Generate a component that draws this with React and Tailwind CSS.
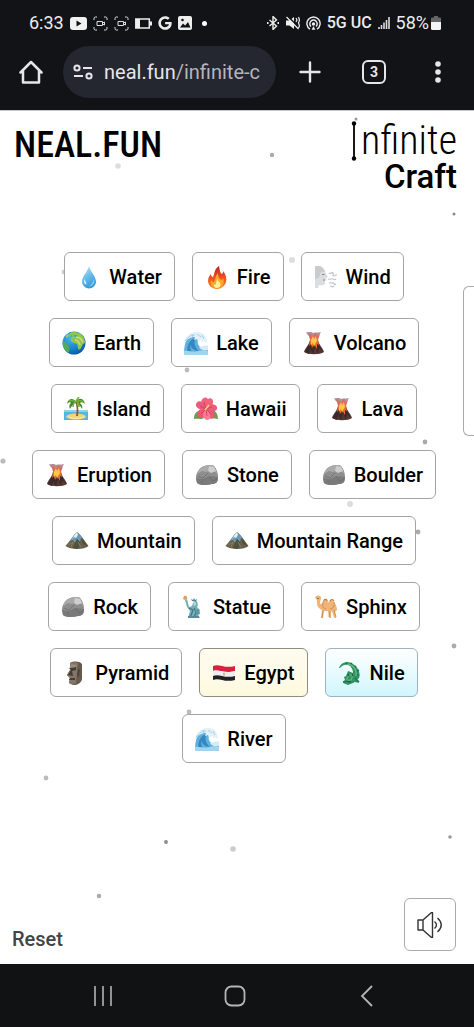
import { useState } from "react"
import { FaGoogle } from "react-icons/fa"

const ITEMS = [
  { icon: "water", name: "Water" },
  { icon: "fire", name: "Fire" },
  { icon: "wind", name: "Wind" },
  { icon: "earth", name: "Earth" },
  { icon: "wave", name: "Lake" },
  { icon: "volcano", name: "Volcano" },
  { icon: "island", name: "Island" },
  { icon: "flower", name: "Hawaii" },
  { icon: "volcano", name: "Lava" },
  { icon: "volcano", name: "Eruption" },
  { icon: "rock", name: "Stone" },
  { icon: "rock", name: "Boulder" },
  { icon: "mountain", name: "Mountain" },
  { icon: "mountain", name: "Mountain Range" },
  { icon: "rock", name: "Rock" },
  { icon: "statue", name: "Statue" },
  { icon: "camel", name: "Sphinx" },
  { icon: "moai", name: "Pyramid" },
  { icon: "flag", name: "Egypt", tone: "sand" },
  { icon: "crocodile", name: "Nile", tone: "ice" },
  { icon: "wave", name: "River" },
]

// Floating background particles: x, y, radius, colour
const PARTICLES = [
  [356, 8, 1.5, "#999"],
  [272, 44, 2.2, "#aaa"],
  [118, 55, 2.8, "#ddd"],
  [454, 103, 1.5, "#888"],
  [292, 149, 3, "#ddd"],
  [64, 161, 2.4, "#ccc"],
  [187, 259, 2.4, "#bbb"],
  [425, 331, 2.4, "#aaa"],
  [3, 350, 2.6, "#bbb"],
  [350, 393, 3, "#ddd"],
  [418, 421, 2.4, "#aaa"],
  [454, 535, 2.4, "#aaa"],
  [189, 601, 2.4, "#bbb"],
  [46, 667, 2.4, "#bbb"],
  [450, 726, 1.8, "#999"],
  [166, 731, 1.9, "#888"],
  [233, 738, 2.8, "#ccc"],
  [99, 785, 2.2, "#aaa"],
]

const TONES = {
  plain: "border-[#a5a5a5] bg-white",
  sand: "border-[#8f8c80] bg-linear-to-b from-[#fffcf0] to-[#fdf9e0]",
  ice: "border-[#9fb2bd] bg-linear-to-b from-white to-[#cff6fd]",
}

const DRAWINGS = {
  water: (
    <>
      <defs>
        <linearGradient id="drop" x1="0" y1="0" x2="0.4" y2="1">
          <stop offset="0" stopColor="#c5e4f2" />
          <stop offset="0.6" stopColor="#65b9e8" />
          <stop offset="1" stopColor="#389adb" />
        </linearGradient>
      </defs>
      <path d="M12 1C11 6 5 11 5 17a7 6.500 0 0 0 14 0C19 11 13 6 12 1z" fill="url(#drop)" />
      <path d="M7.500 14c-1 3 0 5 1.500 5.500 1-.5-.5-3-1.500-5.500z" fill="#e5f7ff" />
      <path d="M17 14c1 4-1 7-5 7.500 3-2 4-4 5-7.500z" fill="#8bd5fa" />
    </>
  ),
  fire: (
    <>
      <defs>
        <linearGradient id="flame" x1="0" y1="0" x2="0" y2="1">
          <stop offset="0" stopColor="#b9211c" />
          <stop offset="0.45" stopColor="#ee4b23" />
          <stop offset="1" stopColor="#f58a22" />
        </linearGradient>
      </defs>
      <path d="M14 1c1 5 1 7 3 8 1-1 1-2 1-3 3 4 4 7 3 11-1 4-5 7-9 7s-9-3-9-8c0-4 2-6 3-7 0 2 1 3 2 3 2-4 1-8 6-11z" fill="url(#flame)" />
      <path d="M13 8c0 4 1 5 3 7 1 0 2-1 2-2 2 5 0 10-6 10-5 0-7-3-6-8 1 2 2 2 3 2 2-3 1-6 4-9z" fill="#fba927" />
      <path d="M12.500 14c0 2 3 3 3 6 0 2-2 3-4 3s-3-2-2.500-4c1 1 1.500 1 2 0 .5-2 0-3 1.500-5z" fill="#fff19b" />
    </>
  ),
  wind: (
    <>
      <path d="M1 1h5c3 1 5 4 5.500 7l2.500 4-2 1 .5 2-1.500 1v3c-2 2-4 1-6 1l-1 3H1z" fill="#dcddde" />
      <path d="M1 1h5c2 1 4 3 5 6-4-1-5 0-5 3-1 3-3 4-5 4z" fill="#c9cbcd" />
      <path d="M8 9.500h2.500M9 15h2" stroke="#858789" strokeWidth="1" />
      <path d="M15 8c2 2 3-2 4 0s-1 3 1 3 1-2 3-1M14 14c3 1 3-1 5 0s2 1 3 0M15 18c2-1 3 1 4 0s1 3 3 1M16 21c2 0 2 2 4 0" fill="none" stroke="#bfc2c5" strokeWidth="1.200" />
    </>
  ),
  earth: (
    <>
      <defs>
        <radialGradient id="ocean" cx="0.35" cy="0.3" r="0.8">
          <stop offset="0" stopColor="#49b4ee" />
          <stop offset="0.6" stopColor="#1680cc" />
          <stop offset="1" stopColor="#0a4e9b" />
        </radialGradient>
      </defs>
      <circle cx="12" cy="12" r="11.500" fill="url(#ocean)" />
      <path d="M8 2c3-2 8-1 11 1 2 2 4 5 4 9l-2 1-2 4c-1 2-3 2-3 0l-1-4c-2-1-4-1-6-3-1-2 0-4 2-5l3 1 2-1-3-1-2 1-2-1-1 2-2-1 2-2z" fill="#8fc650" />
      <path d="M14 6l4 1 3 4M13 9c2 0 4 2 5 5" stroke="#d5d970" strokeWidth="1.500" fill="none" />
      <path d="M1 10c3 1 5 4 6 6 1 3 0 5-1 6-3-2-6-7-5-12z" fill="#55a862" />
      <path d="M4 4l3-1-1 3-2 1z" fill="#9ac970" />
    </>
  ),
  wave: (
    <>
      <path d="M0 24C0 13 2 4 11 2c6-1 10 3 11 8l-3-2c-4-1-6 2-5 5s5 5 10 5v6z" fill="#5fb2e0" />
      <path d="M3 22C3 13 6 8 12 7c-3 4-1 10 3 13-4 0-7-2-9-6 0 4 1 6 3 8z" fill="#3587c0" />
      <path d="M0 13C1 6 5 2 11 1c7-1 11 3 12 9l-1 2-2-2-1 2-2-3-3 2-1-3-3 1 1-3c-5 0-8 2-11 7z" fill="#e3f1f8" />
      <path d="M1 10c3-4 6-6 10-6M13 3l4 3M8 3l1 3M18 4l2 4" stroke="#9ccbe4" strokeWidth="0.900" fill="none" />
      <path d="M15 16c2-1 3 0 4-1s3 0 5-1v5c-4 1-7 0-9-3z" fill="#d5ecf7" />
      <path d="M0 20c6-1 9 2 14 0 4-1 7-1 10 0v4H0z" fill="#9fd5f0" />
    </>
  ),
  volcano: (
    <>
      <path d="M4 1c3 1 4-1 7 1 2-1 5 0 8-1-1 2-2 3-3 4v4H8V5C6 5 5 3 4 1z" fill="#b08f99" />
      <path d="M6 2l5 3 3-3 1 3 3-2-2 6H8L7 5z" fill="#d96b5f" />
      <path d="M8 9h8c1 5 5 8 6 12-4 3-16 3-20 0 1-4 5-7 6-12z" fill="#553731" />
      <path d="M9 9c-1 5-5 8-6 12l4 2 1-5 3 5 2-7 3 7 1-6 4 4c-2-4-5-8-6-12z" fill="#3c2929" />
      <path d="M8 9h8l1 5-2-1v5l-3-5-2 4-1-4-2 2z" fill="#f06b2e" />
      <path d="M9 9l2-4 1 3 2-3 1 5-2 3-1 3-1-4-2 2z" fill="#ffc746" />
    </>
  ),
  island: (
    <>
      <path d="M0 13h24v10H0z" fill="#55b5e2" />
      <path d="M0 13h24v2H0z" fill="#8dd4ee" />
      <ellipse cx="12" cy="19.500" rx="10" ry="3" fill="#f4d27d" />
      <path d="M5 20c5 2 10 2 15 0" stroke="#fff0b5" fill="none" />
      <path d="M11 5c2 4 2 8 1 14h2c1-6 0-10-1-14z" fill="#8a5b35" />
      <path d="M12 5C9 0 4 2 3 7c2-2 3-2 4-1-2 1-2 4-1 6 1-3 4-5 6-7zM12 5c2-5 8-4 9 2-2-2-4-2-5-1 2 2 3 4 2 6-1-3-4-5-6-7z" fill="#438c2b" />
      <path d="M12 5C9 3 7 3 5 4M13 5c2-2 4-2 6 0M12 5c-2 0-3 3-3 5M13 5c2 1 2 3 2 5M12 5c0-2 1-3 3-5" stroke="#74ad38" strokeWidth="1.500" fill="none" />
    </>
  ),
  flower: (
    <>
      <path d="M0 22c0-6 3-8 7-9l3 8c-3 2-6 0-10 1zM24 22c0-6-3-9-8-10l-2 9c3 1 6 0 10 1z" fill="#6d9b50" />
      <path d="M12 12C6 9 6 2 10 1c2-1 3 0 4 1 3-2 6 1 5 4-1 3-4 5-7 6z" fill="#f2627f" />
      <path d="M12 12C6 14 1 10 2 7c1-3 4-4 7-1 2 2 3 3 3 6zM12 12c3-6 9-6 11-2 1 4-3 6-11 2z" fill="#ef5a7b" />
      <path d="M12 12c6 0 10 4 8 8-3 3-7 2-8-8zM12 12C6 10 2 15 4 19c3 4 8 2 8-7z" fill="#ef5778" />
      <path d="M12 12c-5 5-3 10 1 11 4 0 5-6-1-11z" fill="#f87c91" />
      <path d="M12 12L10 5M12 12L6 9M12 12l6-2M12 12l5 5M12 12l-5 5M12 12l1 7" stroke="#cf3b63" strokeWidth="0.800" />
      <path d="M11 13l4-5" stroke="#ffd466" strokeWidth="1.500" />
    </>
  ),
  rock: (
    <>
      <path d="M1 15c0-5 3-9 6-11 4-2 9-3 12-1 3 3 4 8 4 11 0 5-2 7-6 7-5 1-11 2-15-1z" fill="#8e8e8e" />
      <path d="M7 4c4-2 9-3 12-1l3 7-6-3-5 2-4-1-5 3c1-3 3-6 5-7z" fill="#aaa" />
      <path d="M14 3l5 1 2 4-5 2-3-2z" fill="#cecece" />
      <path d="M1 15l7 1 6-3 9 1c0 5-2 7-6 7-5 1-11 2-15-1z" fill="#7a7a7a" />
      <path d="M3 13l5 2 5-5M14 14l4 4 4-2M8 16l-2 4" stroke="#6a6a6a" strokeWidth="0.700" fill="none" />
    </>
  ),
  mountain: (
    <>
      <path d="M12 3c4 3 8 9 11.500 14-4 4-18 4-23 0C5 12 8 7 12 3z" fill="#675f48" />
      <path d="M12 3c2 1 4 4 6 7l-2-1-1 4-3-3-2 4-2-3-3 1c2-4 5-7 7-9z" fill="#6999b5" />
      <path d="M12 3l1 3-2 3-2-1-2 3c1-3 3-6 5-8z" fill="#e0eef3" />
      <path d="M12 10l-2 4-2 5 5 1 2-7M16 9l2 6 5 2" fill="#4d513d" />
      <path d="M3 16l5-3-2 5M13 13l3 5" stroke="#8c8059" fill="none" />
    </>
  ),
  statue: (
    <>
      <path d="M3 1c2-1 4 1 3 3L4 5 2 4z" fill="#d8a35e" />
      <path d="M4 5l2-1 2 8 3-1 1-3 4-2 1 4-1 2 3 3-2 4 2 4H7l2-7-3-4z" fill="#78aeb7" />
      <path d="M11 6l-1-2 2 1 1-2 1 2 2-1-1 3z" fill="#4f8997" />
      <path d="M12 7h3v3l-2 1z" fill="#b1d5d6" />
      <path d="M8 13l4 2-3 8M13 13l2 4-2 6" stroke="#3d7482" strokeWidth="1.200" fill="none" />
      <path d="M14 15l4-1 1 5-4 1z" fill="#5c98a3" />
      <path d="M7 21h11v2H7z" fill="#538b9a" />
    </>
  ),
  camel: (
    <>
      <path d="M1 3c1-3 4-3 6-1 0 3-1 4-1 7 2 0 3-1 4-4 2-2 4 0 4 3 2-4 5-5 6-1 2 3 3 5 3 8l-2 2 1 6h-2l-2-7-1 1v6h-2l-1-7h-4l-1 7H7l1-8c-3-2-5-3-5-7V5z" fill="#efb477" />
      <path d="M10 5c-2 4-2 8 2 9M20 7c1 4-1 7-4 7" stroke="#cf9057" fill="none" />
      <path d="M9 16l-1 7M20 15l2 7M16 16l-1 6" stroke="#c88a50" strokeWidth="0.900" />
      <path d="M10 5c1-1 3-1 3 1M16 6c1-2 3-2 4 0" stroke="#b87d45" strokeWidth="1.200" fill="none" />
      <circle cx="4" cy="3.300" r="0.600" fill="#40291c" />
    </>
  ),
  moai: (
    <>
      <path d="M7 2c4-2 9-2 12 1v15c-1 4-4 6-9 6l-4-2 1-5-3-3 3-5z" fill="#665a4d" />
      <path d="M7 2c3-1 6-1 8 0l-1 9-1 11-3 2-4-2 1-5-3-3 3-5z" fill="#82766a" />
      <path d="M6 7l7-1v3l-4 1 1 5-5-1 3-5zM7 17h5v2H6z" fill="#443c35" />
      <path d="M8 3l6 1-1 2-6 1z" fill="#9a8c7a" />
      <path d="M15 8l2 1-1 6-2 1z" fill="#4c433b" />
    </>
  ),
  flag: (
    <>
      <path d="M1 5c6-3 11 3 22 0v5C12 13 7 8 1 10z" fill="#dc2140" />
      <path d="M1 10c6-2 11 3 22 0v5c-11 3-16-3-22 0z" fill="#eee" />
      <path d="M1 15c6-3 11 3 22 0v4c-11 3-16-3-22 0z" fill="#202124" />
      <path d="M11 11.500l1 .5 1-.5v3h-2z" fill="#d9b878" />
    </>
  ),
  crocodile: (
    <>
      <path d="M1 7C3 1 10-1 15 3c5 3 8 9 6 14l-2 2 2 3-4-1-2 1-5 2-5-2 2-3-1-3 2-1 2-5 5 2c0-4-2-7-5-8-4-1-6 1-8 3z" fill="#2f9363" />
      <path d="M9 3c7 1 10 6 9 12M11 14l-3 6 5-1 2-5z" fill="none" stroke="#69b57d" strokeWidth="1.300" />
      <path d="M9 3l-1-1M13 3l1-1M17 6l1-1M19 10l2-1M19 14l2 0" stroke="#226645" strokeWidth="1.200" />
      <path d="M10 13l1 2M14 13l1 2M8 20l5 1" stroke="#195038" strokeWidth="1.100" />
      <path d="M17 17l4 4M8 20l-3 1" stroke="#26724d" strokeWidth="1.500" />
    </>
  ),
}

function Emoji({ name }) {
  return (
    <svg viewBox="0 0 24 24" className="size-6 shrink-0" aria-hidden="true">
      {DRAWINGS[name]}
    </svg>
  )
}

function Item({ item }) {
  return (
    <button
      className={`flex h-[49px] items-center gap-2 rounded-md border px-3 text-xl font-medium text-black ${
        TONES[item.tone || "plain"]
      }`}
    >
      <Emoji name={item.icon} />
      {item.name}
    </button>
  )
}

function CaptureIcon() {
  return (
    <svg viewBox="0 0 15 15" className="size-[15px]" fill="none" stroke="#ddd" aria-hidden="true">
      <path d="M1 4V2.500Q1 1 2.500 1H4M11 1h1.500Q14 1 14 2.500V4M14 11v1.500q0 1.500-1.500 1.500H11M4 14H2.500Q1 14 1 12.500V11" />
      <path d="M4 5.500h5.500v4H4zM9.500 7l2-1v3l-2-1" />
    </svg>
  )
}

function StatusBar() {
  return (
    <div className="flex h-[46px] items-center justify-between pr-[33px] pl-[29px] text-[#ececec]">
      <div className="flex items-center gap-[6px]">
        <span className="text-lg">6:33</span>
        <svg viewBox="0 0 17 13" className="h-[13px] w-[17px]" aria-hidden="true">
          <rect width="17" height="13" rx="3" fill="#f1f1f1" />
          <path d="M6.500 3.500v6l5-3z" fill="#121316" />
        </svg>
        <CaptureIcon />
        <CaptureIcon />
        <svg viewBox="0 0 17 11" className="h-[11px] w-[17px]" aria-hidden="true">
          <rect x="0.800" y="1" width="13.500" height="9" fill="none" stroke="#eee" strokeWidth="1.500" />
          <path d="M1 1h4v9H1zM15 3.500h2v4h-2z" fill="#eee" />
        </svg>
        <FaGoogle className="size-[14px]" />
        <svg viewBox="0 0 14 14" className="size-[14px]" aria-hidden="true">
          <rect width="14" height="14" rx="2" fill="#eee" />
          <path d="M2 11.500l3-4 2.200 2L10 6l2.500 5.500z" fill="#121316" />
          <circle cx="4.500" cy="4" r="1.300" fill="#121316" />
        </svg>
        <span className="ml-1 size-[5px] rounded-full bg-white" />
      </div>
      <div className="flex items-center gap-[6px]">
        <svg viewBox="0 0 14 14" className="size-[14px]" fill="none" stroke="#eee" strokeWidth="1.400" aria-hidden="true">
          <path d="M3.500 4l7 6-3.500 3.500v-13L10.500 4l-7 6" />
          <path d="M1 7h1.500M11.500 7H13" strokeWidth="2" />
        </svg>
        <svg viewBox="0 0 14 14" className="size-[14px]" aria-hidden="true">
          <path d="M0 4.500h3.500L8 1v12L3.500 9.500H0z" fill="#eee" />
          <path d="M1.500 0l12.500 12.500" stroke="#121316" strokeWidth="1.500" />
          <path d="M.5 1l12 12M10 2l1 2-1 2M12.500 1l1 3-1 3 1 3-1 2" fill="none" stroke="#eee" strokeWidth="1.200" />
        </svg>
        <svg viewBox="0 0 15 15" className="size-[15px]" fill="none" stroke="#eee" strokeWidth="1.400" aria-hidden="true">
          <path d="M4 13.200a6.600 6.600 0 1 1 7 0M5 10.500a3.700 3.700 0 1 1 5 0" />
          <circle cx="7.500" cy="8" r="1" fill="#eee" />
          <path d="M6 13.500l1.500-3 1.500 3z" fill="#eee" strokeWidth="0.500" />
        </svg>
        <span className="text-base font-medium">5G UC</span>
        <svg viewBox="0 0 12 12" className="size-3" stroke="#ddd" strokeWidth="1.600" aria-hidden="true">
          <path d="M1 12v-2M3.500 12V8M6 12V5.500M8.500 12V3M11 12V0" />
        </svg>
        <div className="flex items-center gap-[2px]">
          <span className="text-lg">58%</span>
          <svg viewBox="0 0 10 14" className="h-[14px] w-[10px]" aria-hidden="true">
            <path d="M3 0h4v1.500h2q1 0 1 1V6H0V2.500q0-1 1-1h2z" fill="#666" />
            <path d="M0 6h10v6.500q0 1.500-1.500 1.500h-7Q0 14 0 12.500z" fill="#f4f4f4" />
          </svg>
        </div>
      </div>
    </div>
  )
}

function BrowserBar() {
  return (
    <div className="flex items-center pr-6 pb-3 pl-[19px] text-[#e6e6ea]">
      <button aria-label="Home" className="mr-5">
        <svg viewBox="0 0 24 24" className="size-6" fill="none" stroke="currentColor" strokeWidth="2.500" strokeLinejoin="round" strokeLinecap="round">
          <path d="M1.500 12.500L12 2l10.500 10.500M4 11v11.500h16V11" />
        </svg>
      </button>
      <button className="flex h-[52px] min-w-0 flex-1 items-center gap-[11px] overflow-hidden rounded-full bg-[#242630] pr-[8px] pl-[10px] text-xl">
        <svg viewBox="0 0 20 16" className="h-4 w-5 shrink-0" fill="none" stroke="currentColor" strokeWidth="2" aria-hidden="true">
          <circle cx="4" cy="4" r="2.600" />
          <circle cx="16" cy="12" r="2.600" />
          <path d="M10 4h9M1 12h9" />
        </svg>
        <span className="overflow-hidden whitespace-nowrap">
          neal.fun<span className="text-[#b4b5bd]">/infinite-c</span>
        </span>
      </button>
      <div className="ml-[22px] flex items-center gap-10">
        <button aria-label="New tab">
          <svg viewBox="0 0 24 24" className="size-6" stroke="currentColor" strokeWidth="2.400" strokeLinecap="round">
            <path d="M12 2.500v19M2.500 12h19" />
          </svg>
        </button>
        <button
          aria-label="3 open tabs"
          className="flex size-6 items-center justify-center rounded-md border-2 border-current text-sm font-bold"
        >
          3
        </button>
        <button aria-label="Menu">
          <svg viewBox="0 0 24 24" className="size-6" fill="currentColor">
            <circle cx="12" cy="4" r="2.800" />
            <circle cx="12" cy="12" r="2.800" />
            <circle cx="12" cy="20" r="2.800" />
          </svg>
        </button>
      </div>
    </div>
  )
}

function GameHeader() {
  return (
    <header className="relative flex items-start justify-between pt-3 pr-[17px] pl-[14px] text-black">
      <a
        href="#home"
        className="font-['Roboto_Condensed',Roboto,sans-serif] text-[36px] leading-[44px] font-medium"
      >
        NEAL.FUN
      </a>
      <h1 className="flex flex-col items-end">
        <span className="flex h-9 items-center font-['Roboto_Condensed',Roboto,sans-serif] text-[40px] leading-9 font-light">
          {/* Capital I drawn as two joined nodes */}
          <svg viewBox="0 0 6 40" className="mr-1 h-10 w-[6px]" role="img" aria-label="I">
            <path d="M3 2v36" stroke="#000" strokeWidth="1.800" />
            <circle cx="3" cy="2.500" r="2.200" />
            <circle cx="3" cy="37.500" r="2.200" />
          </svg>
          nfinite
        </span>
        <span className="text-[33px] leading-9 font-medium">Craft</span>
      </h1>
    </header>
  )
}

function NavBar() {
  return (
    <nav className="flex h-[63px] items-center justify-center gap-[108px] bg-[#111214] pr-1 text-[#b5b5b5]">
      <button aria-label="Recent apps">
        <svg viewBox="0 0 24 24" className="size-6" stroke="currentColor" strokeWidth="1.600">
          <path d="M4 2v20M12 2v20M20 2v20" />
        </svg>
      </button>
      <button aria-label="Home screen">
        <svg viewBox="0 0 24 24" className="size-6" fill="none" stroke="currentColor" strokeWidth="1.800">
          <rect x="2.500" y="2.500" width="19" height="19" rx="6" />
        </svg>
      </button>
      <button aria-label="Back">
        <svg viewBox="0 0 24 24" className="size-6" fill="none" stroke="currentColor" strokeWidth="1.800">
          <path d="M17 2L7 12l10 10" />
        </svg>
      </button>
    </nav>
  )
}

export default function App() {
  const [muted, setMuted] = useState(false)

  return (
    <div className="flex min-h-screen flex-col bg-[#121316] font-[Roboto,sans-serif]">
      <StatusBar />
      <BrowserBar />

      <main className="relative flex flex-1 flex-col overflow-hidden border-t border-[#c8c8cc] bg-white">
        <svg className="absolute inset-0 size-full" aria-hidden="true">
          {PARTICLES.map(([x, y, r, color]) => (
            <circle key={`${x}-${y}`} cx={x} cy={y} r={r} fill={color} />
          ))}
        </svg>

        <GameHeader />

        <section className="relative mt-[57px] flex flex-wrap justify-center gap-[17px] pr-[22px] pl-4">
          {ITEMS.map((item) => (
            <Item key={item.name} item={item} />
          ))}
        </section>

        {/* Edge of the drawer */}
        <button
          aria-label="Open drawer"
          className="absolute top-[175px] right-0 h-[150px] w-[11px] rounded-l-md border border-r-0 border-[#aaa] bg-white"
        />

        <footer className="relative mt-auto flex items-end justify-between pr-[18px] pb-[13px] pl-3">
          <button className="text-xl leading-6 font-medium text-[#444]">Reset</button>
          <button
            aria-label={muted ? "Unmute" : "Mute"}
            onClick={() => setMuted(!muted)}
            className="flex h-[53px] w-[52px] items-center justify-center rounded-md border border-[#aaa] bg-white"
          >
            <svg viewBox="0 0 26 26" className="size-[26px]" fill="none" stroke="#333" strokeWidth="1.400" strokeLinejoin="round">
              <path d="M1 8h5v10H1zM6 8l8.500-7.500h1v25h-1L6 18" />
              {!muted && <path d="M17.500 9.500q4 3.500 0 7M20.500 6q7.500 7 0 14" />}
            </svg>
          </button>
        </footer>
      </main>

      <NavBar />
    </div>
  )
}
